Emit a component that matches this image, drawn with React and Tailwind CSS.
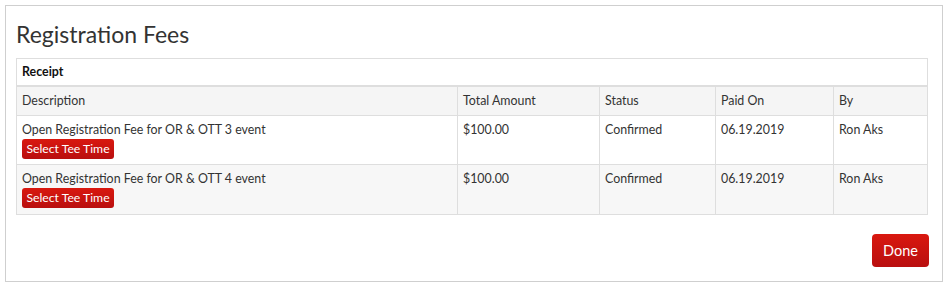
import React from "react";

const rows = [
  { desc: "Open Registration Fee for OR & OTT 3 event", amount: "$100.00", status: "Confirmed", paid: "06.19.2019", by: "Ron Aks", bg: "bg-white" },
  { desc: "Open Registration Fee for OR & OTT 4 event", amount: "$100.00", status: "Confirmed", paid: "06.19.2019", by: "Ron Aks", bg: "bg-[#f7f7f7]" },
];

const grid = "grid grid-cols-[441px_142px_116px_118px_93px]";
const cell = "border-r border-[#dedede] pl-[5px]";

export default function App() {
  return (
    <div className="bg-white w-[949px] h-[288px] pt-[5px] pl-[5px]" style={{ fontFamily: "Lato, 'Liberation Sans', sans-serif" }}>
      <div className="w-[938px] h-[277px] border border-[#cfcfcf] pl-[10px] pt-[16px] text-[#333]">
        <h1 className="text-[23px] leading-[24px] h-[24px] mb-[12px] text-[#333] font-normal">Registration Fees</h1>
        <div className="w-[912px] border border-[#dedede]">
          <div className="h-[28px] border-b-2 border-[#dedede] pl-[5px] flex items-center text-[12.4px] font-bold text-[#111]">Receipt</div>
          <div className={`${grid} h-[29px] bg-[#f5f5f5] border-b border-[#dedede] text-[12.4px] text-[#333]`}>
            {["Description", "Total Amount", "Status", "Paid On", "By"].map((h, i) => (
              <div key={h} className={`${i < 4 ? cell : "pl-[5px]"} flex items-center`}>{h}</div>
            ))}
          </div>
          {rows.map((r, idx) => (
            <div key={idx} className={`${grid} h-[49px] ${r.bg} ${idx === 0 ? "border-b border-[#dedede]" : ""} text-[12.4px] text-[#333]`}>
              <div className={`${cell} pt-[6px]`}>
                <div className="leading-[16px]">{r.desc}</div>
                <button className="mt-[1px] h-[20px] w-[92px] rounded-[3px] bg-linear-to-b from-[#d9180f] to-[#b90f0f] text-white text-[12.2px] leading-[20px] text-center">Select Tee Time</button>
              </div>
              <div className={`${cell} pt-[6px] leading-[16px]`}>{r.amount}</div>
              <div className={`${cell} pt-[6px] leading-[16px]`}>{r.status}</div>
              <div className={`${cell} pt-[6px] leading-[16px]`}>{r.paid}</div>
              <div className="pl-[5px] pt-[6px] leading-[16px]">{r.by}</div>
            </div>
          ))}
        </div>
        <div className="w-[913px] flex justify-end mt-[19px]">
          <button className="h-[33px] w-[57px] rounded-[4px] bg-linear-to-b from-[#d9180f] to-[#b90f0f] text-white text-[14.5px] leading-[33px] text-center">Done</button>
        </div>
      </div>
    </div>
  );
}
